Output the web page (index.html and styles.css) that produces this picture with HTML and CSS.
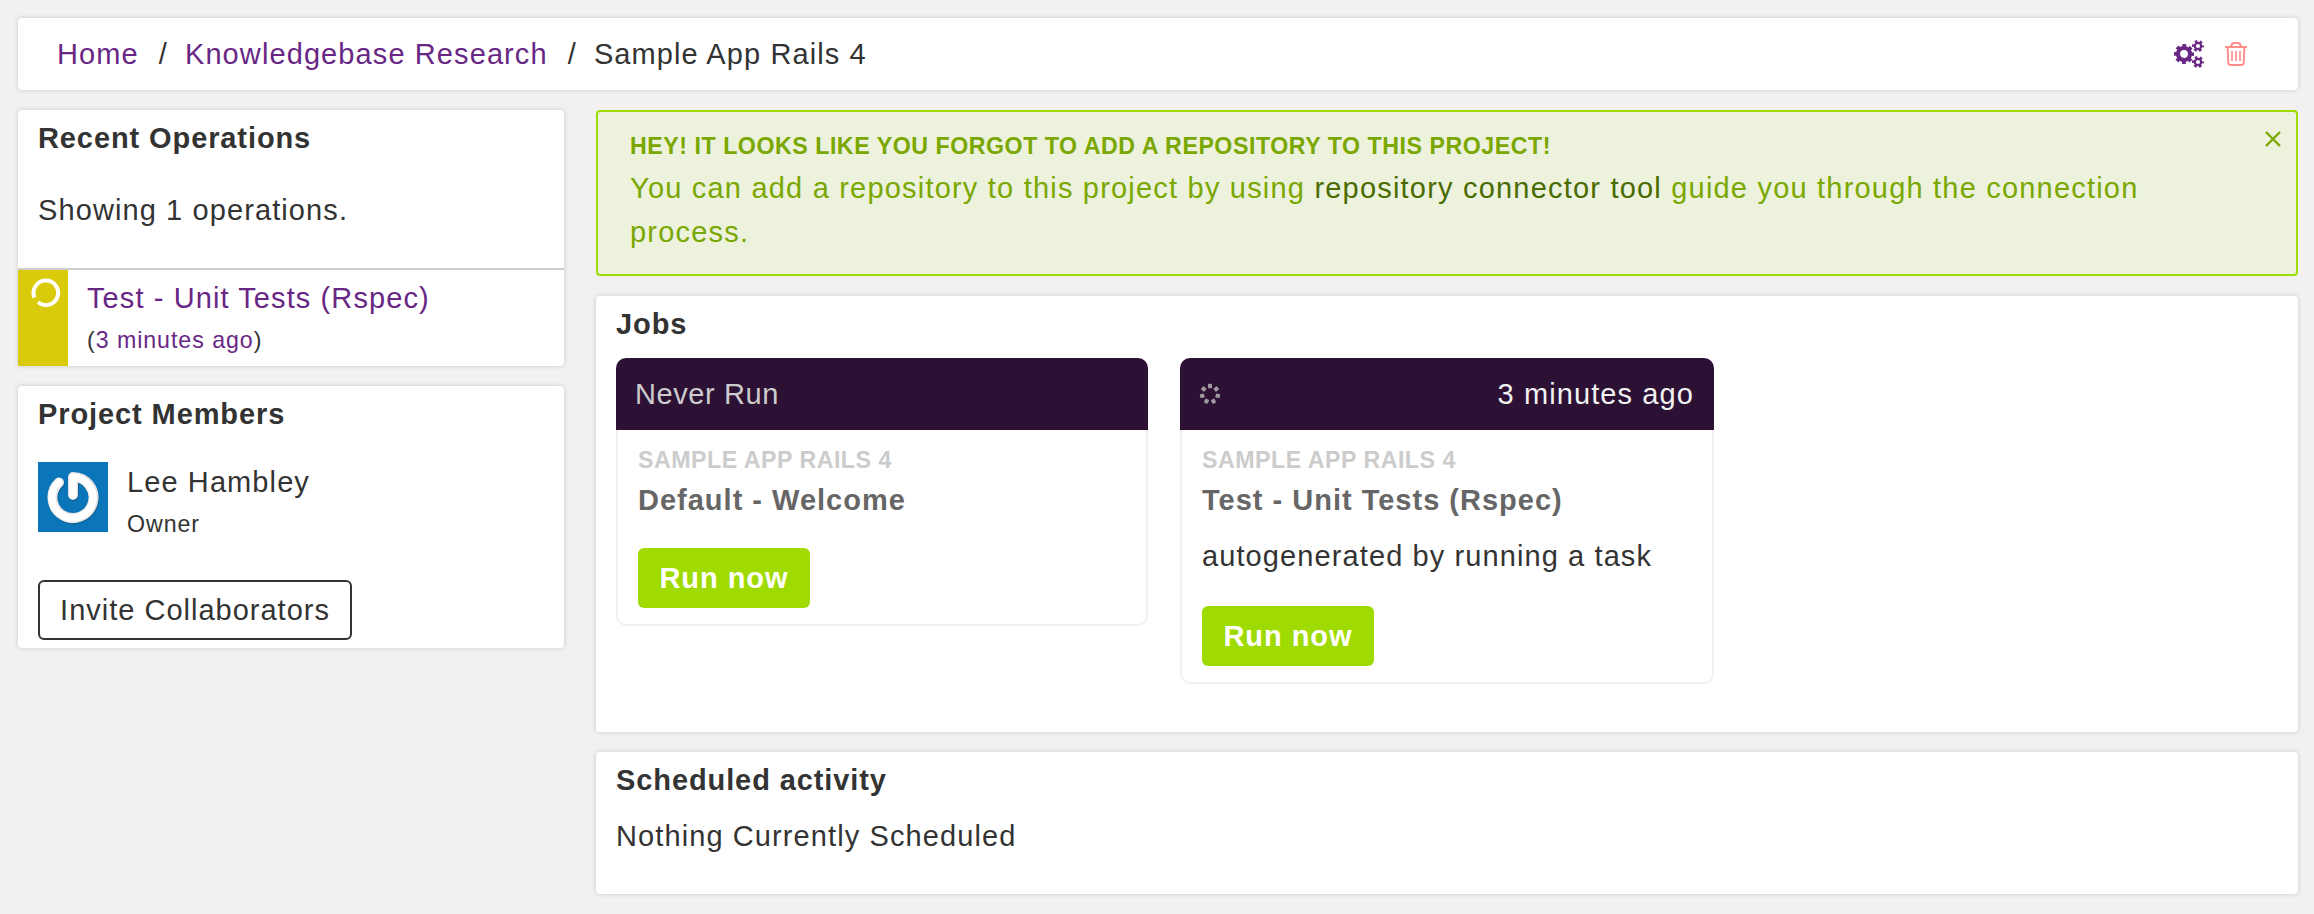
FILE: index.html
```html
<!DOCTYPE html>
<html lang="en">
<head>
<meta charset="utf-8">
<title>Sample App Rails 4</title>
<link rel="stylesheet" href="styles.css">
</head>
<body>
<header class="panel topbar">
  <nav class="breadcrumb">
    <a href="#">Home</a><span class="sep">/</span><a href="#">Knowledgebase Research</a><span class="sep">/</span><span>Sample App Rails 4</span>
  </nav>
  <div class="actions">
    <svg class="cogs" width="30" height="28" viewBox="0 0 30 28" fill="none" stroke="#692785">
      <circle cx="10" cy="14" r="6" stroke-width="4.2"/>
      <circle cx="10" cy="14" r="8.4" stroke-width="3.2" stroke-dasharray="3.7 2.897" stroke-dashoffset="1.85"/>
      <circle cx="24" cy="6" r="3.2" stroke-width="2.2"/>
      <circle cx="24" cy="6" r="4.9" stroke-width="2.2" stroke-dasharray="2.6 2.531" stroke-dashoffset="1.3"/>
      <circle cx="24" cy="22" r="3.2" stroke-width="2.2"/>
      <circle cx="24" cy="22" r="4.9" stroke-width="2.2" stroke-dasharray="2.6 2.531" stroke-dashoffset="1.3"/>
    </svg>
    <svg class="trash" width="22" height="24" viewBox="0 0 22 24" fill="none" stroke="#ff8f8c" stroke-width="2">
      <path d="M0 5H22M6 4.500Q6.500 1 9.500 1H12.500Q15.500 1 16 4.500"/>
      <path d="M2.700 5L3.200 20.500Q3.300 23 5.500 23H16.500Q18.700 23 18.800 20.500L19.300 5"/>
      <path d="M7 9V19M11 9V19M15 9V19" stroke-width="1.700"/>
    </svg>
  </div>
</header>
<div class="columns">
  <aside class="side">
    <section class="panel">
      <h2 class="title">Recent Operations</h2>
      <p class="showing">Showing 1 operations.</p>
      <div class="operation">
        <div class="status">
          <svg width="30" height="30" viewBox="0 0 30 30" fill="none" stroke="#fff" stroke-width="4"><path d="M3.500 19.600A12.300 12.300 0 1 1 7 24.300"/></svg>
        </div>
        <div class="operation-text">
          <a class="line" href="#">Test - Unit Tests (Rspec)</a>
          <div class="small">(<a href="#">3 minutes ago</a>)</div>
        </div>
      </div>
    </section>
    <section class="panel members">
      <h2 class="title">Project Members</h2>
      <div class="member">
        <svg class="avatar" width="70" height="70" viewBox="0 0 70 70">
          <rect width="70" height="70" fill="#0a75b9"/>
          <g fill="none" stroke-linecap="round" stroke-linejoin="round">
            <path d="M21 20.500A20.500 20.500 0 1 0 35 15V33" stroke="#075b94" stroke-width="10.500" transform="translate(.5 .8)"/>
            <path d="M21 20.500A20.500 20.500 0 1 0 35 15V33" stroke="#e2e2e2" stroke-width="10"/>
            <path d="M21 20A20.500 20.500 0 1 0 35 15V33" stroke="#fff" stroke-width="7.500"/>
          </g>
        </svg>
        <div>
          <div class="line">Lee Hambley</div>
          <div class="small">Owner</div>
        </div>
      </div>
      <button class="invite">Invite Collaborators</button>
    </section>
  </aside>
  <main class="main">
    <section class="alert">
      <strong class="alert-title">Hey! It looks like you forgot to add a repository to this project!</strong>
      <p class="alert-text">You can add a repository to this project by using <a href="#">repository connector tool</a> guide you through the connection process.</p>
      <svg class="close" width="16" height="16" viewBox="0 0 16 16" stroke="#7aa700" stroke-width="2.300"><path d="M1 1L15 15M15 1L1 15"/></svg>
    </section>
    <section class="panel jobs">
      <h2 class="title">Jobs</h2>
      <div class="cards">
        <article class="card">
          <div class="card-head"><span class="never">Never Run</span></div>
          <div class="card-body">
            <div class="project">Sample App Rails 4</div>
            <h3 class="job">Default - Welcome</h3>
            <button class="run">Run now</button>
          </div>
        </article>
        <article class="card wide">
          <div class="card-head">
            <svg width="22" height="24" viewBox="-11 -12 22 24" fill="#a09a9f">
              <rect x="-2" y="-10.200" width="4" height="4.400" rx=".8"/>
              <rect x="-2" y="-10.200" width="4" height="4.400" rx=".8" transform="rotate(51.400)"/>
              <rect x="-2" y="-10.200" width="4" height="4.400" rx=".8" transform="rotate(102.900)"/>
              <rect x="-2" y="-10.200" width="4" height="4.400" rx=".8" transform="rotate(154.300)"/>
              <rect x="-2" y="-10.200" width="4" height="4.400" rx=".8" transform="rotate(205.700)"/>
              <rect x="-2" y="-10.200" width="4" height="4.400" rx=".8" transform="rotate(257.100)"/>
              <rect x="-2" y="-10.200" width="4" height="4.400" rx=".8" transform="rotate(308.600)"/>
            </svg>
            <span class="ago">3 minutes ago</span>
          </div>
          <div class="card-body">
            <div class="project">Sample App Rails 4</div>
            <h3 class="job">Test - Unit Tests (Rspec)</h3>
            <p class="desc">autogenerated by running a task</p>
            <button class="run">Run now</button>
          </div>
        </article>
      </div>
    </section>
    <section class="panel scheduled">
      <h2 class="title">Scheduled activity</h2>
      <p class="nothing">Nothing Currently Scheduled</p>
    </section>
  </main>
</div>
</body>
</html>
```
FILE: styles.css
```css
* { box-sizing: border-box; }
body {
  margin: 0;
  padding: 18px 16px 20px 18px;
  background: #f1f1f1;
  color: #333;
  font: 29px/44px "Liberation Sans", Arial, sans-serif;
  letter-spacing: 1.1px;
}
h2, h3, p { margin: 0; font-size: inherit; }
a { color: #692785; text-decoration: none; }
svg { display: block; flex: none; }
button { font: inherit; letter-spacing: inherit; display: block; }
.panel {
  background: #fff;
  border-radius: 4px;
  box-shadow: 0 0 5px rgba(0, 0, 0, .16);
}
.topbar {
  height: 72px;
  display: flex;
  align-items: center;
  justify-content: space-between;
  padding: 0 51px 0 39px;
}
.breadcrumb { display: flex; }
.sep { margin: 0 17px 0 20px; }
.actions { display: flex; align-items: center; gap: 21px; }
.columns {
  display: grid;
  grid-template-columns: 546px 1702px;
  gap: 32px;
  align-items: start;
  margin-top: 20px;
}
.side, .main { display: grid; gap: 20px; }
.title { padding: 6px 20px 0; font-weight: bold; letter-spacing: .9px; }
.showing { padding: 28px 20px 36px; }
.operation {
  display: flex;
  height: 98px;
  border-top: 2px solid #ccc;
}
.status { width: 50px; background: #dacb0a; padding: 8px 0 0 13px; }
.operation-text { padding: 6px 0 0 19px; }
.line { display: block; }
.small { font-size: 23.2px; line-height: 40px; letter-spacing: .95px; }
.members { height: 262px; }
.member { display: flex; gap: 19px; padding: 24px 20px 0; }
.avatar { margin-top: 2px; }
.invite {
  width: 314px;
  height: 60px;
  margin: 36px 0 0 20px;
  padding: 0;
  background: #fff;
  border: 2px solid #333;
  border-radius: 6px;
  color: #333;
  letter-spacing: 1px;
}
.alert {
  position: relative;
  height: 166px;
  padding: 18px 120px 0 32px;
  background: #ecf2dc;
  border: 2px solid #9fda00;
  border-radius: 4px;
  color: #7aa700;
}
.alert-title {
  display: block;
  margin-bottom: 4px;
  font-size: 23.2px;
  line-height: 32px;
  letter-spacing: .53px;
  text-transform: uppercase;
}
.alert-text { letter-spacing: 1.2px; }
.alert-text a { color: #4a6b00; }
.close { position: absolute; top: 19px; right: 15px; }
.jobs { height: 436px; }
.cards { display: flex; align-items: flex-start; gap: 32px; padding: 12px 20px 0; }
.card {
  width: 532px;
  border: 2px solid #f1f1f1;
  border-top: 0;
  border-radius: 10px;
}
.wide { width: 534px; }
.card-head {
  display: flex;
  align-items: center;
  justify-content: space-between;
  height: 72px;
  margin: 0 -2px;
  padding: 0 20px 0 19px;
  background: #2c1135;
  border-radius: 10px 10px 0 0;
  color: #f1f1f1;
}
.never { color: #ccc; letter-spacing: .6px; }
.card-body { padding: 14px 20px 16px; }
.project {
  color: #ccc;
  font-size: 23.2px;
  font-weight: bold;
  line-height: 32px;
  letter-spacing: .5px;
  text-transform: uppercase;
}
.job { margin-top: 2px; color: #666; letter-spacing: 1px; }
.desc { margin: 12px 0 28px; }
.run {
  width: 172px;
  height: 60px;
  padding: 0;
  background: #9fda00;
  border: 0;
  border-radius: 6px;
  color: #fff;
  font-weight: bold;
  letter-spacing: .95px;
}
.job + .run { margin-top: 26px; }
.scheduled { height: 142px; }
.nothing { padding: 12px 20px 0; }
```
